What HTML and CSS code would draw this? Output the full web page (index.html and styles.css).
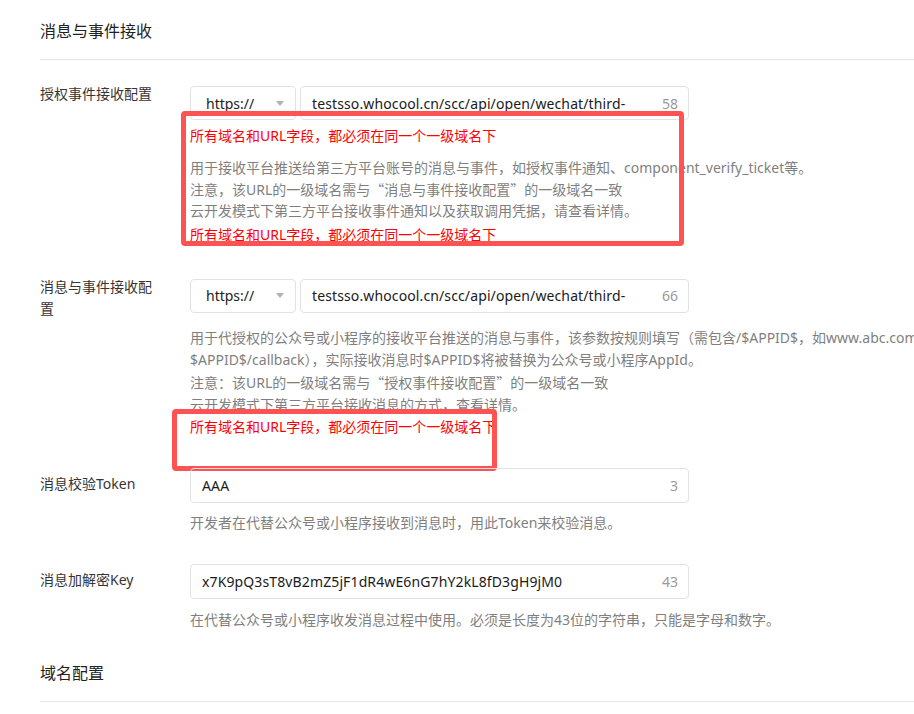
FILE: index.html
```html
<!DOCTYPE html>
<html lang="zh-CN">
<head>
  <meta charset="UTF-8">
  <meta name="viewport" content="width=device-width, initial-scale=1.0">
  <title>消息与事件接收</title>
  <link rel="stylesheet" href="styles.css">
</head>
<body>
  <h2 class="section-title">消息与事件接收</h2>

  <div class="form-row">
    <div class="form-label">授权事件接收配置</div>
    <div class="form-control">
      <div class="url-group">
        <div class="proto-select">
          <span>https://</span>
          <i class="caret"></i>
        </div>
        <div class="text-input url-input">
          <span class="value">testsso.whocool.cn/scc/api/open/wechat/third-</span>
          <span class="count">58</span>
        </div>
      </div>
      <p class="warn warn-top">所有域名和URL字段，都必须在同一个一级域名下</p>
      <div class="tips tips-dense">
        <p>用于接收平台推送给第三方平台账号的消息与事件，如授权事件通知、component_verify_ticket等。</p>
        <p>注意，该URL的一级域名需与<span class="cjk">“</span>消息与事件接收配置<span class="cjk">”</span>的一级域名一致</p>
        <p>云开发模式下第三方平台接收事件通知以及获取调用凭据，请查看详情。</p>
      </div>
      <p class="warn warn-after">所有域名和URL字段，都必须在同一个一级域名下</p>
    </div>
    <div class="mark mark-one"></div>
  </div>

  <div class="form-row">
    <div class="form-label">消息与事件接收配置</div>
    <div class="form-control">
      <div class="url-group">
        <div class="proto-select">
          <span>https://</span>
          <i class="caret"></i>
        </div>
        <div class="text-input url-input">
          <span class="value">testsso.whocool.cn/scc/api/open/wechat/third-</span>
          <span class="count">66</span>
        </div>
      </div>
      <div class="tips tips-loose">
        <p>用于代授权的公众号或小程序的接收平台推送的消息与事件，该参数按规则填写（需包含/$APPID$，如www.abc.com/</p>
        <p>$APPID$/callback），实际接收消息时$APPID$将被替换为公众号或小程序AppId。</p>
        <p>注意：该URL的一级域名需与<span class="cjk">“</span>授权事件接收配置<span class="cjk">”</span>的一级域名一致</p>
        <p>云开发模式下第三方平台接收消息的方式，查看详情。</p>
        <p class="warn">所有域名和URL字段，都必须在同一个一级域名下</p>
      </div>
    </div>
    <div class="mark mark-two"></div>
  </div>

  <div class="form-row">
    <div class="form-label label-mid">消息校验Token</div>
    <div class="form-control">
      <div class="text-input tall">
        <span class="value">AAA</span>
        <span class="count">3</span>
      </div>
      <div class="tips tips-short">
        <p>开发者在代替公众号或小程序接收到消息时，用此Token来校验消息。</p>
      </div>
    </div>
  </div>

  <div class="form-row">
    <div class="form-label label-mid">消息加解密Key</div>
    <div class="form-control">
      <div class="text-input tall">
        <span class="value">x7K9pQ3sT8vB2mZ5jF1dR4wE6nG7hY2kL8fD3gH9jM0</span>
        <span class="count">43</span>
      </div>
      <div class="tips">
        <p>在代替公众号或小程序收发消息过程中使用。必须是长度为43位的字符串，只能是字母和数字。</p>
      </div>
    </div>
  </div>

  <h2 class="section-title">域名配置</h2>
</body>
</html>
```

FILE: styles.css
```css
html {
    overflow: hidden;
}
body {
    margin: 0;
    padding: 19px 0 0 40px;
    background-color: #ffffff;
    font-family: "Noto Sans", "Noto Sans CJK SC", sans-serif;
    font-size: 14px;
    color: #353535;
}
p {
    margin: 0;
}
.cjk {
    font-family: "Noto Sans CJK SC", sans-serif;
}
.section-title {
    margin: 0;
    padding-bottom: 16px;
    font-size: 16px;
    font-weight: normal;
    line-height: 24px;
    color: #222222;
    border-bottom: 1px solid #e7e7e7;
}
.section-title + .form-row {
    margin-top: 23px;
}
.form-row + .section-title {
    margin-top: 30px;
}
.form-row {
    position: relative;
    display: flex;
    align-items: flex-start;
    margin-bottom: 30px;
}
.form-row:last-of-type {
    margin-bottom: 0;
}
.form-label {
    width: 120px;
    margin-right: 30px;
    line-height: 22.5px;
    color: #353535;
}
.label-mid {
    padding-top: 5px;
    line-height: 22px;
}
.form-control {
    width: 499px;
    padding-top: 3px;
}
.label-mid + .form-control {
    padding-top: 0;
}
.url-group {
    display: flex;
    gap: 4px;
}
.proto-select {
    box-sizing: border-box;
    width: 106px;
    height: 34px;
    display: flex;
    align-items: center;
    justify-content: space-between;
    padding: 0 11px 0 15px;
    border: 1px solid #e2e2e2;
    border-radius: 4px;
    color: #222222;
}
.caret {
    width: 0;
    height: 0;
    border-left: 4px solid transparent;
    border-right: 4px solid transparent;
    border-top: 5px solid #b2b2b2;
}
.text-input {
    box-sizing: border-box;
    flex: 1;
    height: 34px;
    display: flex;
    align-items: center;
    justify-content: space-between;
    padding: 0 10px 0 11px;
    border: 1px solid #e2e2e2;
    border-radius: 4px;
    color: #1a1a1a;
}
.text-input.tall {
    height: 35px;
}
.text-input .value {
    white-space: nowrap;
    letter-spacing: 0.12px;
}
.text-input .count {
    color: #9a9a9a;
}
.warn {
    line-height: 22px;
    color: #ff0000;
    white-space: nowrap;
}
.warn-top {
    margin-top: 5px;
}
.warn-after {
    margin-top: 2px;
}
.tips {
    margin-top: 10px;
    line-height: 22px;
    color: #7f7f7f;
    white-space: nowrap;
}
.tips-dense {
    line-height: 21.5px;
}
.tips-loose {
    margin-top: 14px;
}
.tips-short {
    margin-top: 9px;
}
/* annotation boxes drawn over the form */
.mark {
    position: absolute;
    box-sizing: border-box;
    border: 5px solid #ff5353;
    border-radius: 4px;
    pointer-events: none;
}
.mark-one {
    left: 141px;
    top: 28px;
    width: 503px;
    height: 135px;
}
.mark-two {
    left: 132px;
    top: 133.5px;
    width: 325px;
    height: 62px;
}
```
